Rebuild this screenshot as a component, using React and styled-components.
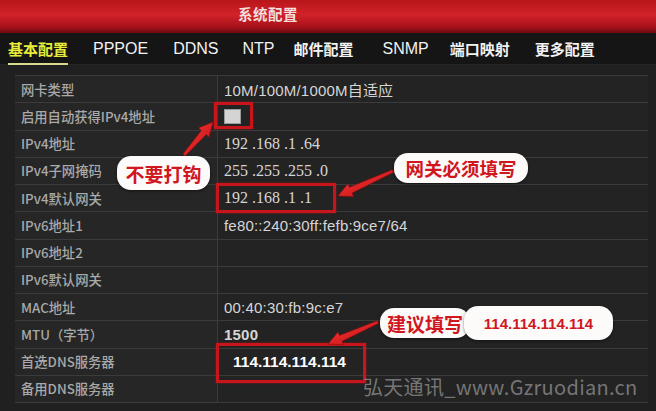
import React from 'react';
import styled, { createGlobalStyle } from 'styled-components';

const GlobalStyle = createGlobalStyle`
	html, body {
		margin: 0;
		padding: 0;
		background: #1f1f1f;
	}
	#root {
		width: 656px;
		height: 411px;
		overflow: hidden;
	}
`;

const Page = styled.div`
	position: relative;
	width: 656px;
	height: 411px;
	background: #202020;
	font-family: 'Liberation Sans', 'Noto Sans CJK SC', sans-serif;
	overflow: hidden;
`;

const Header = styled.div`
	height: 33px;
	padding: 0 0 6px 238px;
	box-sizing: border-box;
	display: flex;
	align-items: center;
	background: linear-gradient(180deg, #b8161a 0%, #d2222a 45%, #a8121a 80%, #6e0a0e 100%);
	color: #f4dede;
	font-family: 'Noto Sans CJK SC', sans-serif;
	font-weight: 700;
	font-size: 14.5px;
	letter-spacing: 0.5px;
`;

const TabBar = styled.div`
	height: 31px;
	display: flex;
	align-items: center;
	padding-left: 8px;
	background: #151515;
	border-bottom: 1px solid #262626;
`;

const Tab = styled.div`
	position: relative;
	margin-right: ${(p) => p.gap}px;
	font-family: ${(p) =>
		p.cjk ? "'Noto Sans CJK SC', sans-serif" : "'Liberation Sans', sans-serif"};
	font-weight: ${(p) => (p.cjk ? 700 : 400)};
	font-size: ${(p) => (p.cjk ? 15 : 16)}px;
	color: ${(p) => (p.active ? '#e8ec3a' : '#f2f2f2')};
	line-height: 20px;
	white-space: nowrap;

	&::after {
		content: '';
		display: ${(p) => (p.active ? 'block' : 'none')};
		position: absolute;
		left: 0;
		right: 0;
		bottom: -6px;
		height: 2px;
		background: #d8dc8a;
	}
`;

const Table = styled.div`
	margin: 10px 8px 0 15px;
	display: grid;
	grid-template-columns: 203px 1fr;
	background: #2a2a2a;
	border-top: 1px solid #3a3a3a;
`;

const Label = styled.div`
	height: 27.25px;
	box-sizing: border-box;
	padding-left: 6px;
	display: flex;
	align-items: center;
	background: #262626;
	border-bottom: 1.5px solid #3b3b3b;
	border-right: 1.5px solid #3b3b3b;
	color: #a9a9a9;
	font-size: 13.3px;
	font-family: 'Noto Sans CJK SC', 'Liberation Sans', sans-serif;
	font-weight: 500;
	white-space: nowrap;
`;

const Value = styled.div`
	height: 27.25px;
	box-sizing: border-box;
	padding-left: ${(p) => (p.indent ? 15 : 6)}px;
	display: flex;
	align-items: center;
	background: #232323;
	border-bottom: 1.5px solid #3b3b3b;
	color: ${(p) => (p.strong ? '#ffffff' : '#d6d6d6')};
	font-size: ${(p) => (p.serif ? 16 : p.strong ? 15.5 : 15)}px;
	font-weight: ${(p) => (p.strong || p.bold ? 700 : 400)};
	font-family: ${(p) =>
		p.serif
			? "'Liberation Serif', serif"
			: "'Liberation Sans', 'Noto Sans CJK SC', sans-serif"};
	letter-spacing: ${(p) => (p.serif || p.strong ? 0 : 0.2)}px;
	white-space: nowrap;
`;

const Check = styled.span`
	width: 15px;
	height: 13px;
	background: #d4d4d4;
	border: 1px solid #9a9a9a;
`;

const RedBox = styled.div`
	position: absolute;
	left: ${(p) => p.x}px;
	top: ${(p) => p.y}px;
	width: ${(p) => p.w}px;
	height: ${(p) => p.h}px;
	box-sizing: border-box;
	border: 3px solid #c8141b;
	box-shadow: 0 0 2px rgba(200, 20, 27, 0.6);
`;

const Bubble = styled.div`
	position: absolute;
	left: ${(p) => p.x}px;
	top: ${(p) => p.y}px;
	width: ${(p) => p.w}px;
	height: ${(p) => p.h}px;
	box-sizing: border-box;
	display: flex;
	align-items: center;
	justify-content: center;
	background: #fdfafa;
	border-radius: 14px;
	box-shadow: 0 1px 3px rgba(0, 0, 0, 0.5);
	color: #d0161e;
	font-family: ${(p) =>
		p.latin ? "'Liberation Sans', sans-serif" : "'Noto Sans CJK SC', sans-serif"};
	font-weight: 700;
	font-size: ${(p) => p.size}px;
	white-space: nowrap;
`;

const Watermark = styled.div`
	position: absolute;
	left: 363px;
	top: 372px;
	font-family: 'Noto Sans CJK SC', 'DejaVu Sans', sans-serif;
	font-size: 20px;
	color: rgba(190, 190, 190, 0.55);
	letter-spacing: 0.3px;
	white-space: nowrap;
`;

const Overlay = styled.svg`
	position: absolute;
	left: 0;
	top: 0;
	pointer-events: none;
`;

const tabs = [
	{ text: '基本配置', cjk: true, active: true, gap: 25 },
	{ text: 'PPPOE', gap: 25 },
	{ text: 'DDNS', gap: 24 },
	{ text: 'NTP', gap: 19 },
	{ text: '邮件配置', cjk: true, gap: 29 },
	{ text: 'SNMP', gap: 21 },
	{ text: '端口映射', cjk: true, gap: 25 },
	{ text: '更多配置', cjk: true, gap: 0 },
];

const rows = [
	['网卡类型', '10M/100M/1000M自适应', {}],
	['启用自动获得IPv4地址', 'check', {}],
	['IPv4地址', '192 .168 .1 .64', { serif: true }],
	['IPv4子网掩码', '255 .255 .255 .0', { serif: true }],
	['IPv4默认网关', '192 .168 .1 .1', { serif: true }],
	['IPv6地址1', 'fe80::240:30ff:fefb:9ce7/64', {}],
	['IPv6地址2', '', {}],
	['IPv6默认网关', '', {}],
	['MAC地址', '00:40:30:fb:9c:e7', {}],
	['MTU（字节）', '1500', { bold: true }],
	['首选DNS服务器', '114.114.114.114', { strong: true, indent: true }],
	['备用DNS服务器', '', {}],
];

// thick red arrow from tail (x1,y1) to tip (x2,y2)
const arrowPoints = (x1, y1, x2, y2) => {
	const dx = x2 - x1;
	const dy = y2 - y1;
	const len = Math.hypot(dx, dy);
	const ux = dx / len;
	const uy = dy / len;
	const nx = -uy;
	const ny = ux;
	const head = 14;
	const hw = 7;
	const tw = 1.4;
	const sw = 3.2;
	const bx = x2 - ux * head;
	const by = y2 - uy * head;
	const pts = [
		[x1 + nx * tw, y1 + ny * tw],
		[bx + nx * sw, by + ny * sw],
		[bx + nx * hw, by + ny * hw],
		[x2, y2],
		[bx - nx * hw, by - ny * hw],
		[bx - nx * sw, by - ny * sw],
		[x1 - nx * tw, y1 - ny * tw],
	];
	return pts.map((p) => p.map((v) => v.toFixed(1)).join(',')).join(' ');
};

const arrows = [
	[184, 155, 213, 122],
	[393, 171, 338, 196],
	[378, 322, 328, 344],
];

const App = () => {
	return (
		<Page>
			<GlobalStyle />
			<Header>系统配置</Header>
			<TabBar>
				{tabs.map((t) => (
					<Tab key={t.text} cjk={t.cjk} active={t.active} gap={t.gap}>
						{t.text}
					</Tab>
				))}
			</TabBar>
			<Table>
				{rows.map(([label, value, opts]) => (
					<React.Fragment key={label}>
						<Label>{label}</Label>
						<Value {...opts}>{value === 'check' ? <Check /> : value}</Value>
					</React.Fragment>
				))}
			</Table>

			<RedBox x={214} y={102} w={39} h={27} />
			<RedBox x={216} y={183} w={120} h={30} />
			<RedBox x={216} y={343} w={150} h={40} />

			<Bubble x={117} y={156} w={93} h={34} size={19}>
				不要打钩
			</Bubble>
			<Bubble x={394} y={153} w={134} h={30} size={18.5}>
				网关必须填写
			</Bubble>
			<Bubble x={380} y={308} w={90} h={30} size={19}>
				建议填写
			</Bubble>
			<Bubble x={464} y={306} w={149} h={34} size={15} latin>
				114.114.114.114
			</Bubble>

			<Overlay width="656" height="411" viewBox="0 0 656 411">
				<defs>
					<linearGradient id="arrowFill" x1="0" y1="0" x2="1" y2="1">
						<stop offset="0" stopColor="#ff3a36" />
						<stop offset="1" stopColor="#b80d12" />
					</linearGradient>
				</defs>
				{arrows.map((a, i) => (
					<polygon
						key={i}
						points={arrowPoints(...a)}
						fill="url(#arrowFill)"
						stroke="#8c0a0e"
						strokeWidth="0.6"
					/>
				))}
			</Overlay>

			<Watermark>弘天通讯_www.Gzruodian.cn</Watermark>
		</Page>
	);
};

export default App;
